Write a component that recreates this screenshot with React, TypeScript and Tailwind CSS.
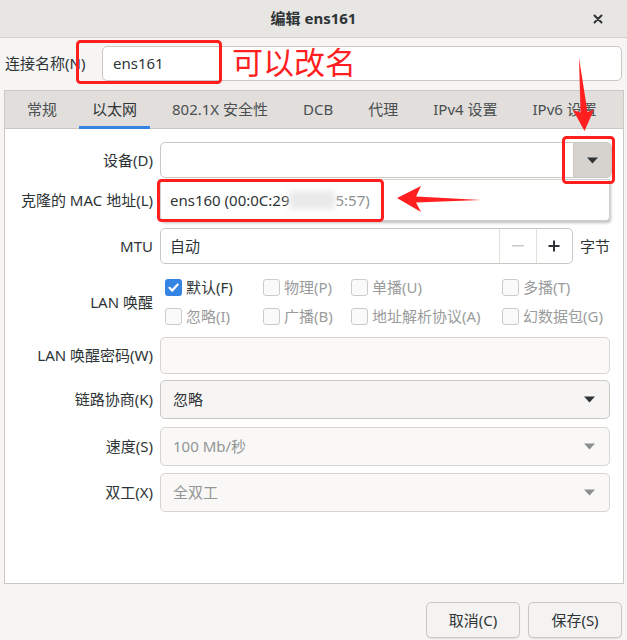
import React from "react";

const Tri = ({ color }: { color: string }) => (
  <svg width="11" height="7" viewBox="0 0 11 7">
    <path d="M0 0.5h11L5.5 6.5z" fill={color} />
  </svg>
);

function Check({ label, checked, disabled }: { label: string; checked?: boolean; disabled?: boolean }) {
  return (
    <div className="flex items-center h-[29px]">
      {checked ? (
        <div className="w-[17px] h-[17px] rounded-[3px] bg-[#3584e4] flex items-center justify-center">
          <svg width="13" height="13" viewBox="0 0 13 13">
            <path d="M2.5 6.8l2.8 2.8 5.4-6" stroke="#fff" strokeWidth="2.2" fill="none" strokeLinecap="round" strokeLinejoin="round" />
          </svg>
        </div>
      ) : (
        <div className="w-[17px] h-[17px] rounded-[3px] border border-[#cfcac5] bg-[#fbfafa]" />
      )}
      <span className={"ml-[4px] text-[15px] leading-none " + (disabled ? "text-[#9a9c9c]" : "text-[#2e3436]")}>{label}</span>
    </div>
  );
}

function Row({ label, children, className }: { label: string; children: React.ReactNode; className?: string }) {
  return (
    <div className={"flex items-center " + (className || "")}>
      <div className="w-[148px] shrink-0 text-right text-[15px] leading-none text-[#2e3436]">{label}</div>
      <div className="ml-[7px] flex-1 flex items-center">{children}</div>
    </div>
  );
}

export default function App() {
  const tabs = ["常规", "以太网", "802.1X 安全性", "DCB", "代理", "IPv4 设置", "IPv6 设置"];
  return (
    <div className="relative w-[627px] h-[640px] overflow-hidden bg-[#f6f5f4] text-[#2e3436] font-['Noto_Sans','Noto_Sans_CJK_SC',sans-serif]">
      {/* header */}
      <div className="h-[38px] grid grid-cols-[34px_1fr_34px] items-center bg-[#e8e6e3] border-b border-[#d3cfcb]">
        <div />
        <div className="text-center text-[15px] font-bold leading-none text-[#2e3436]">编辑 ens161</div>
        <div className="flex items-center justify-start">
          <svg width="10" height="10" viewBox="0 0 10 10">
            <path d="M1.5 1.5l7 7M8.5 1.5l-7 7" stroke="#2e3436" strokeWidth="2" strokeLinecap="round" />
          </svg>
        </div>
      </div>

      {/* name row */}
      <div className="flex items-center pt-[8px] pl-[5px]">
        <div className="w-[97px] text-[15px] leading-none text-[#2e3436]">连接名称(N)</div>
        <div className="w-[520px] h-[35px] rounded-[5px] border border-[#cdc7c2] bg-white flex items-center pl-[10px] text-[15px] leading-none">ens161</div>
      </div>

      {/* notebook */}
      <div className="ml-[4px] mt-[9px] w-[620px] h-[494px] border border-[#cdc7c2] bg-white flex flex-col">
        <div className="h-[38px] bg-[#e1dedb] border-b border-[#cdc7c2] flex items-stretch pl-[9px] gap-[9px]">
          {tabs.map((t, i) => (
            <div key={t} className={"relative px-[13px] flex items-center text-[15px] leading-none " + (i === 1 ? "text-[#2e3436]" : "text-[#4a4f51]")}>
              {t}
              {i === 1 && <div className="absolute left-0 right-0 bottom-[-1px] h-[3px] bg-[#3584e4]" />}
            </div>
          ))}
        </div>

        <div className="flex flex-col pt-[13px] pr-[13px]">
          <Row label="设备(D)">
            <div className="flex-1 h-[36px] -mr-[2px] rounded-[5px] border border-[#cdc7c2] bg-white flex overflow-hidden">
              <div className="flex-1" />
              <div className="w-[38px] bg-[#d6d2ce] border-l border-[#cdc7c2] flex items-center justify-center">
                <Tri color="#2e3436" />
              </div>
            </div>
          </Row>
          <Row label="克隆的 MAC 地址(L)" className="mt-[1px]">
            <div className="flex-1 h-[42px] rounded-b-[4px] border border-[#d3cfcb] bg-white shadow-[1px_2px_3px_rgba(0,0,0,0.25)] flex items-center pl-[9px] text-[15px] leading-none text-[#2e3436]">
              <span>ens160 (00:0C:29</span>
              <span className="inline-block w-[46px] h-[18px] bg-[#e9e9e9] blur-[3px]" />
              <span className="text-[#8e9091]">5:57)</span>
            </div>
          </Row>
          <Row label="MTU" className="mt-[7px]">
            <div className="w-[413px] h-[36px] rounded-[5px] border border-[#cdc7c2] bg-white flex">
              <div className="flex-1 flex items-center pl-[9px] text-[15px] leading-none">自动</div>
              <div className="w-[37px] border-l border-[#e3dfdb] flex items-center justify-center">
                <svg width="12" height="2" viewBox="0 0 12 2"><rect width="12" height="1.5" fill="#c8c8c8" /></svg>
              </div>
              <div className="w-[36px] border-l border-[#e3dfdb] flex items-center justify-center">
                <svg width="12" height="12" viewBox="0 0 12 12"><path d="M6 0.5v11M0.5 6h11" stroke="#2e3436" strokeWidth="2" /></svg>
              </div>
            </div>
            <span className="ml-[7px] text-[15px] leading-none">字节</span>
          </Row>
          <Row label="LAN 唤醒" className="mt-[9px]">
            <div className="flex-1 pl-[5px] grid grid-cols-[98px_88px_151px_1fr]">
              <Check label="默认(F)" checked />
              <Check label="物理(P)" disabled />
              <Check label="单播(U)" disabled />
              <Check label="多播(T)" disabled />
              <Check label="忽略(I)" disabled />
              <Check label="广播(B)" disabled />
              <Check label="地址解析协议(A)" disabled />
              <Check label="幻数据包(G)" disabled />
            </div>
          </Row>
          <Row label="LAN 唤醒密码(W)" className="mt-[6px]">
            <div className="flex-1 h-[37px] rounded-[5px] border border-[#d8d4d0] bg-[#faf9f8]" />
          </Row>
          <Row label="链路协商(K)" className="mt-[6px]">
            <div className="flex-1 h-[39px] rounded-[5px] border border-[#cdc7c2] bg-[#f6f5f4] flex items-center justify-between pl-[12px] pr-[14px] text-[15px] leading-none">
              <span>忽略</span>
              <Tri color="#2e3436" />
            </div>
          </Row>
          <Row label="速度(S)" className="mt-[8px]">
            <div className="flex-1 h-[39px] rounded-[5px] border border-[#d8d4d0] bg-[#f9f8f7] flex items-center justify-between pl-[12px] pr-[14px] text-[15px] leading-none text-[#929595]">
              <span>100 Mb/秒</span>
              <Tri color="#8b8e8f" />
            </div>
          </Row>
          <Row label="双工(X)" className="mt-[7px]">
            <div className="flex-1 h-[39px] rounded-[5px] border border-[#d8d4d0] bg-[#f9f8f7] flex items-center justify-between pl-[12px] pr-[14px] text-[15px] leading-none text-[#929595]">
              <span>全双工</span>
              <Tri color="#8b8e8f" />
            </div>
          </Row>
        </div>
      </div>

      {/* buttons */}
      <div className="flex justify-end gap-[8px] pr-[5px] mt-[18px]">
        <div className="w-[94px] h-[36px] rounded-[5px] border border-[#cdc7c2] bg-[#f4f3f2] shadow-[0_1px_1px_rgba(0,0,0,0.08)] flex items-center justify-center text-[15px] leading-none">取消(C)</div>
        <div className="w-[94px] h-[36px] rounded-[5px] border border-[#cdc7c2] bg-[#f4f3f2] shadow-[0_1px_1px_rgba(0,0,0,0.08)] flex items-center justify-center text-[15px] leading-none">保存(S)</div>
      </div>

      {/* annotations */}
      <div className="absolute left-[232px] top-[45px] text-[31px] leading-none text-[#ff1f1f] font-['Noto_Sans_CJK_SC',sans-serif]">可以改名</div>
      <svg className="absolute left-0 top-0 pointer-events-none" width="627" height="640" viewBox="0 0 627 640">
        <rect x="77.5" y="41.5" width="143" height="41" rx="3" fill="none" stroke="#ff1f1f" strokeWidth="3" />
        <rect x="563.5" y="137.5" width="50" height="45" rx="3" fill="none" stroke="#ff1f1f" strokeWidth="3" />
        <rect x="158.5" y="180.5" width="224" height="40" rx="3" fill="none" stroke="#ff1f1f" strokeWidth="3" />
        <polygon points="579,58 587.5,112 594,109.5 584.5,131 573,110 580.5,112.5" fill="#ff1f1f" />
        <polygon points="397,198 421,186 416,196.5 481,200 416,202.5 421,212" fill="#ff1f1f" />
      </svg>
    </div>
  );
}
